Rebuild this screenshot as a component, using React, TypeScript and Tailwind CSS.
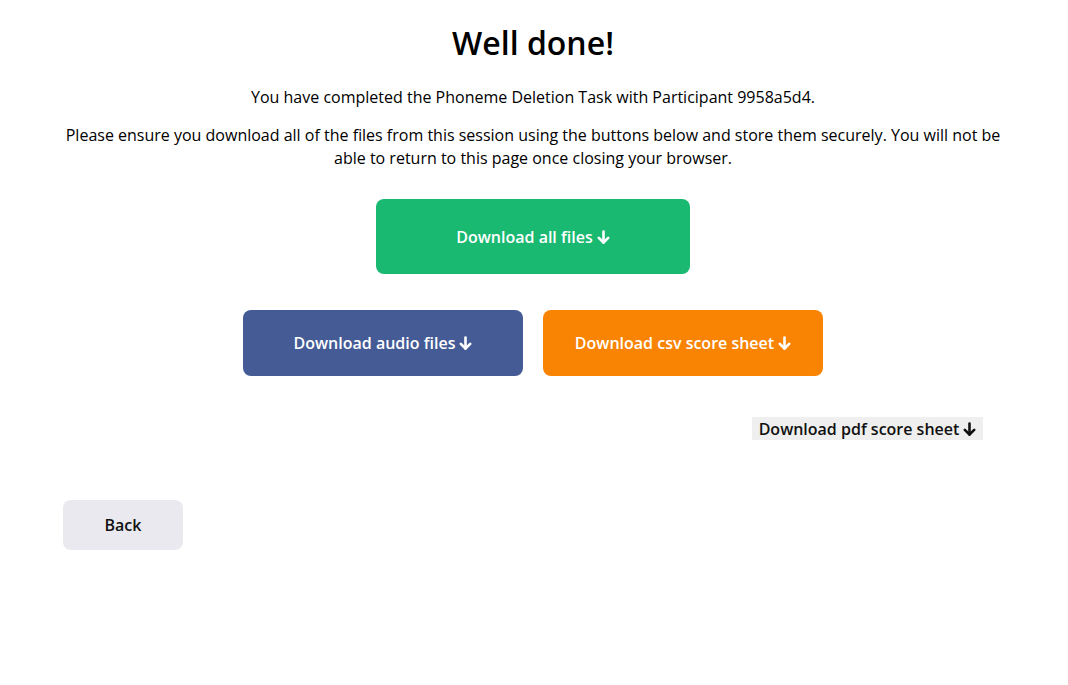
import React from 'react';

function ArrowDown() {
  return (
    <svg
      width="13"
      height="14"
      viewBox="0 0 13 14"
      fill="none"
      stroke="currentColor"
      strokeWidth="2.6"
      strokeLinecap="round"
      strokeLinejoin="round"
      className="ml-1 inline-block"
    >
      <path d="M6.5 1.5v11" />
      <path d="M1.8 7.8l4.7 4.7 4.7-4.7" />
    </svg>
  );
}

function DownloadButton({
  label,
  className
}: {
  label: string;
  className: string;
}) {
  return (
    <button
      type="button"
      className={`flex items-center justify-center rounded-lg text-base font-semibold text-white ${className}`}
    >
      {label}
      <ArrowDown />
    </button>
  );
}

export default function App() {
  return (
    <div
      className="min-h-[685px] w-full bg-white text-black"
      style={{ fontFamily: '"Open Sans", "Liberation Sans", sans-serif' }}
    >
      <div className="flex flex-col items-center pl-[62px] pr-[64px] pt-[21px] text-center">
        <h1 className="text-[32px] font-semibold leading-[44px]">Well done!</h1>
        <p className="mt-[20px] text-base leading-6">
          You have completed the Phoneme Deletion Task with Participant 9958a5d4.
        </p>
        <p className="mt-[15px] text-base leading-[23px]">
          Please ensure you download all of the files from this session using
          the buttons below and store them securely. You will not be able to
          return to this page once closing your browser.
        </p>
        <DownloadButton
          label="Download all files"
          className="mt-[29px] h-[75px] w-[314px] bg-[#19b972]"
        />
        <div className="mt-[36px] flex gap-5">
          <DownloadButton
            label="Download audio files"
            className="h-[66px] w-[280px] bg-[#445b95]"
          />
          <DownloadButton
            label="Download csv score sheet"
            className="h-[66px] w-[280px] bg-[#f98404]"
          />
        </div>
      </div>
      <div className="mt-[41px] flex justify-end pr-[85px]">
        <button
          type="button"
          className="flex h-[23px] w-[231px] items-center justify-center bg-[#efefef] text-base font-semibold text-[#111]"
        >
          Download pdf score sheet
          <ArrowDown />
        </button>
      </div>
      <div className="mt-[60px] px-[63px]">
        <button
          type="button"
          className="h-[50px] w-[120px] rounded-lg bg-[#e9e9ef] text-base font-semibold text-[#111]"
        >
          Back
        </button>
      </div>
    </div>
  );
}
